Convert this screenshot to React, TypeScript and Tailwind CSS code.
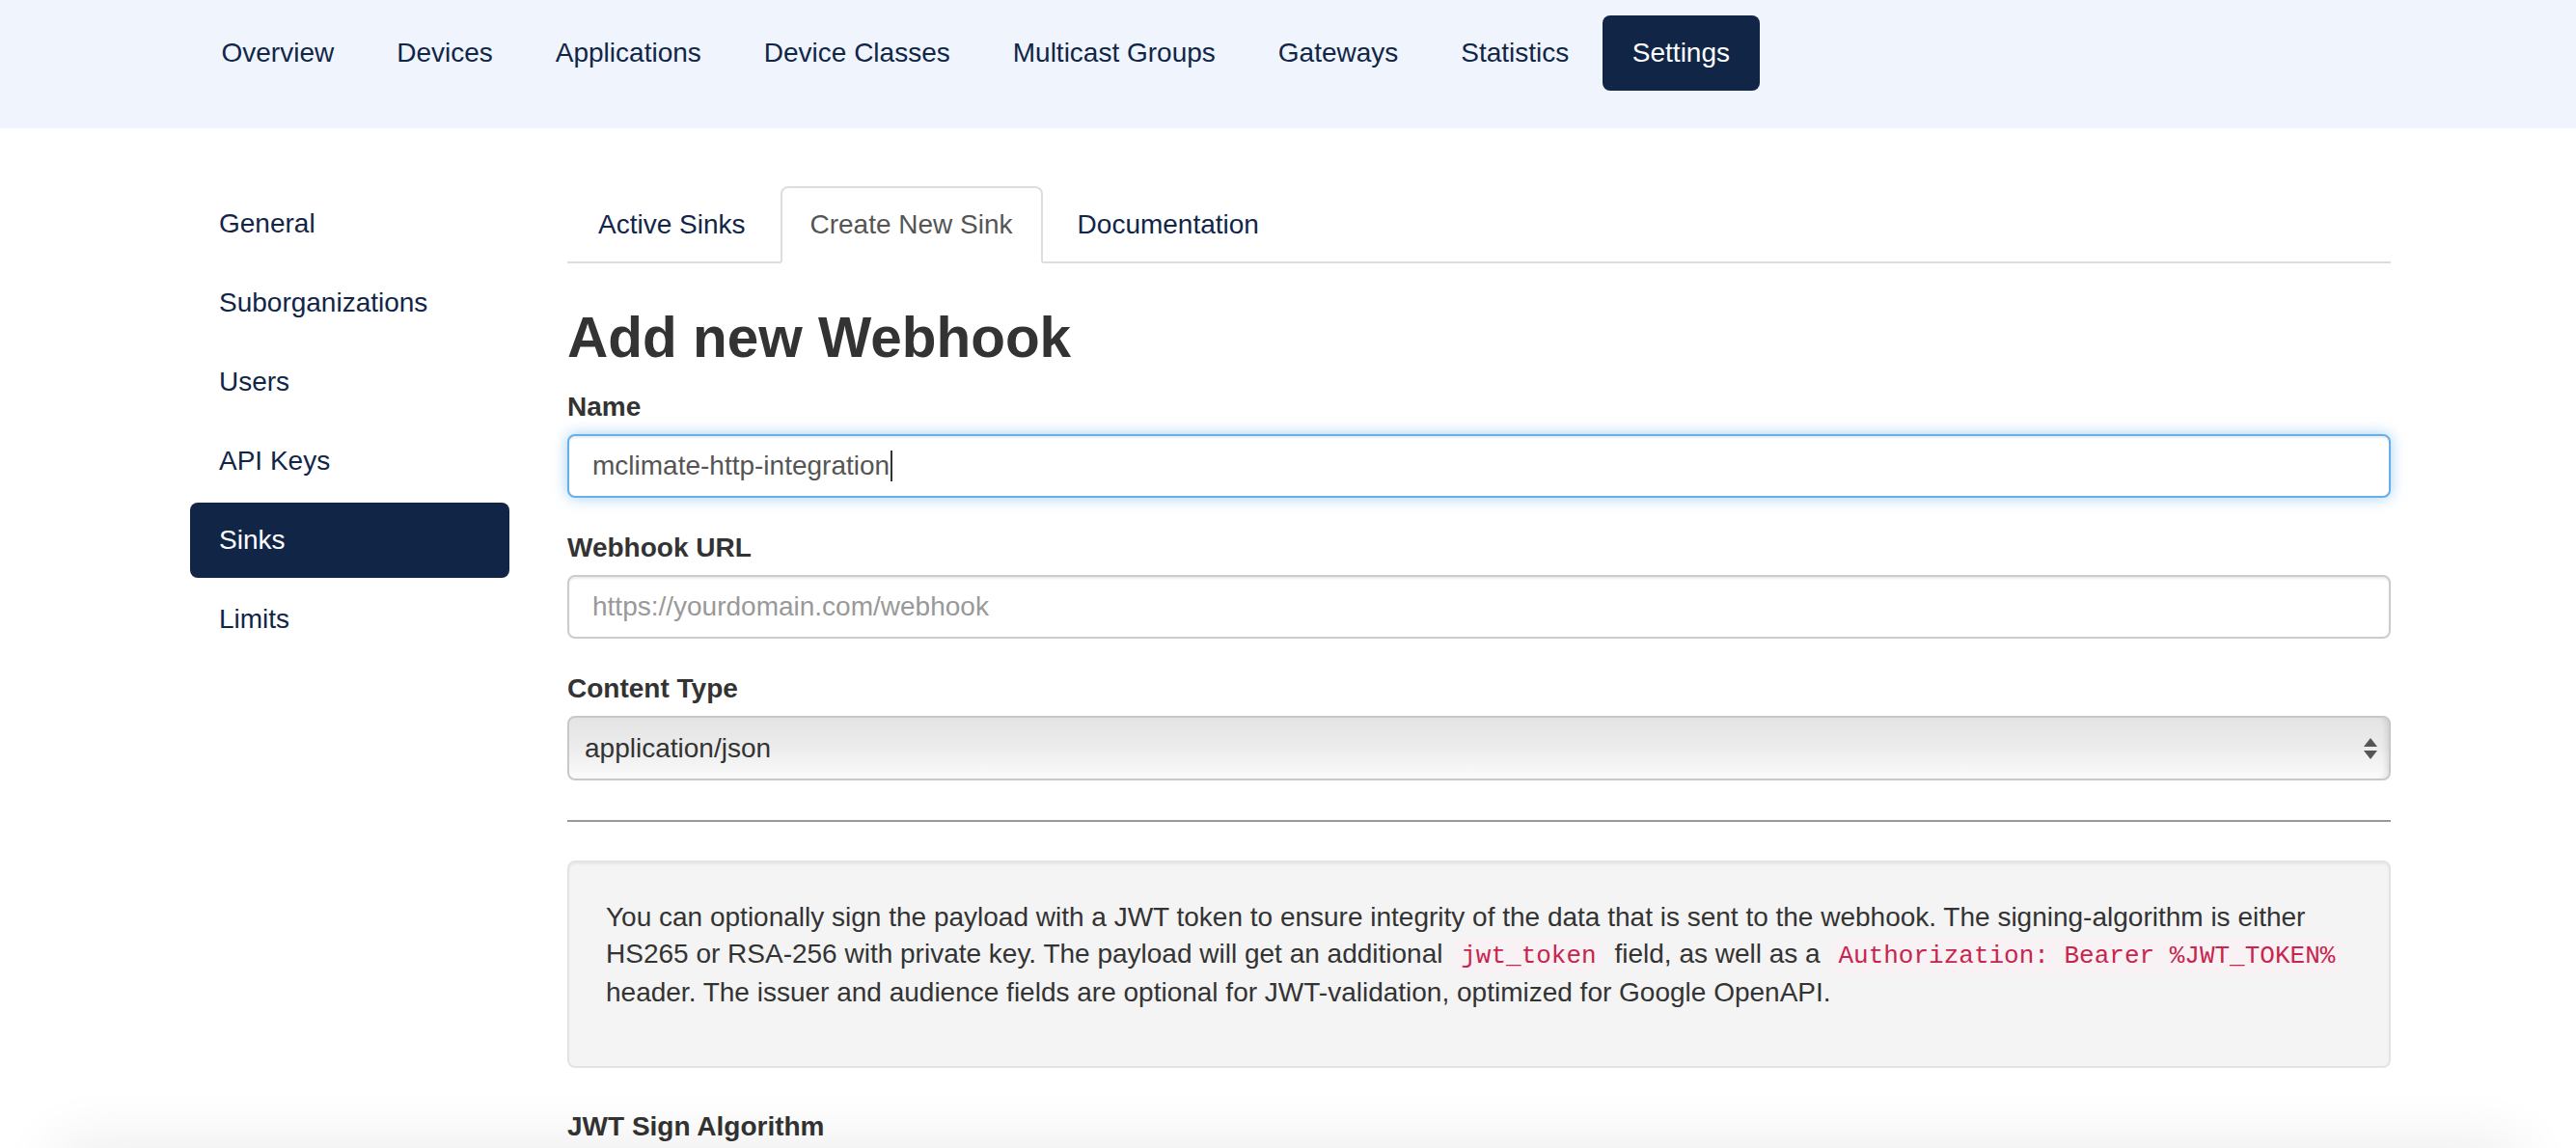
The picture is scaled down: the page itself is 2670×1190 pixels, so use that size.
import { useState } from 'react';

const topNav = ['Overview', 'Devices', 'Applications', 'Device Classes', 'Multicast Groups', 'Gateways', 'Statistics', 'Settings'];
const sideNav = ['General', 'Suborganizations', 'Users', 'API Keys', 'Sinks', 'Limits'];
const tabs = ['Active Sinks', 'Create New Sink', 'Documentation'];

const sans = "font-['Helvetica_Neue','Liberation_Sans',Arial,sans-serif]";
const mono = "font-['Menlo','Liberation_Mono',monospace]";

function Code({ children }: { children: string }) {
  return (
    <code className={`${mono} mx-[5px] rounded-[8px] bg-[#f9f2f4] px-[6px] py-[4px] text-[26px] text-[#c7254e]`}>
      {children}
    </code>
  );
}

function Label({ children }: { children: string }) {
  return <label className="mb-[9px] block text-[28px] font-bold leading-[38px] text-[#333]">{children}</label>;
}

export default function App() {
  const [name] = useState('mclimate-http-integration');

  return (
    <div className={`${sans} relative min-h-[1190px] overflow-hidden bg-white text-[28px] leading-[38px] text-[#333]`}>
      <header className="h-[133px] bg-[#f0f5fd]">
        <nav className="ml-[197px] flex pt-[16px]">
          {topNav.map((item) => (
            <a
              key={item}
              href="#"
              className={
                item === 'Settings'
                  ? 'ml-[2px] flex h-[78px] items-center rounded-[8px] bg-[#112647] px-[31px] text-white'
                  : 'flex h-[78px] items-center px-[32.5px] text-[#112647]'
              }
            >
              {item}
            </a>
          ))}
        </nav>
      </header>

      <div className="ml-[197px] flex w-[2281px] gap-[60px] pt-[60px]">
        <aside className="flex w-[331px] shrink-0 flex-col gap-[4px]">
          {sideNav.map((item) => (
            <a
              key={item}
              href="#"
              className={
                item === 'Sinks'
                  ? 'flex h-[78px] items-center rounded-[8px] bg-[#112647] px-[30px] text-white'
                  : 'flex h-[78px] items-center px-[30px] text-[#112647]'
              }
            >
              {item}
            </a>
          ))}
        </aside>

        <main className="min-w-0 flex-1">
          <ul className="flex border-b-2 border-[#ddd]">
            {tabs.map((tab) => {
              const active = tab === 'Create New Sink';
              return (
                <li key={tab} className="-mb-[2px] mr-[4px]">
                  <a
                    href="#"
                    className={
                      active
                        ? 'block rounded-t-[8px] border-2 border-[#ddd] border-b-white bg-white px-[29px] py-[19px] text-[#555]'
                        : 'block rounded-t-[8px] border-2 border-transparent px-[30px] py-[19px] text-[#112647]'
                    }
                  >
                    {tab}
                  </a>
                </li>
              );
            })}
          </ul>

          <h2 className="mt-[45px] mb-[22px] text-[58.5px] font-bold leading-[63px] text-[#333]">Add new Webhook</h2>

          <div className="mb-[33px]">
            <Label>Name</Label>
            <div className="flex h-[66px] items-center rounded-[8px] border-2 border-[#66afe9] bg-white px-[24px] text-[#555] shadow-[inset_0_2px_2px_rgba(0,0,0,0.075),0_0_15px_rgba(102,175,233,0.6)]">
              <span>{name}</span>
              <span className="ml-[1px] h-[32px] w-[2px] bg-[#333]" />
            </div>
          </div>

          <div className="mb-[33px]">
            <Label>Webhook URL</Label>
            <input
              type="text"
              placeholder="https://yourdomain.com/webhook"
              className="block h-[66px] w-full rounded-[8px] border-2 border-[#ccc] bg-white px-[24px] text-[28px] text-[#555] shadow-[inset_0_2px_2px_rgba(0,0,0,0.075)] outline-none placeholder:text-[#999]"
            />
          </div>

          <div>
            <Label>Content Type</Label>
            <div className="relative">
              <select className="block h-[67px] w-full appearance-none rounded-[8px] border-2 border-[#c8c8c8] bg-gradient-to-b from-[#e4e4e4] via-[#ececec] to-[#fbfbfb] px-[16px] text-[28px] text-[#333] shadow-[inset_-6px_0_6px_-4px_rgba(0,0,0,0.12)] outline-none">
                <option>application/json</option>
              </select>
              <svg className="pointer-events-none absolute top-[23px] right-[14px]" width="14" height="22" viewBox="0 0 14 22">
                <path d="M7 0 L14 9 L0 9 Z" fill="#555" />
                <path d="M0 13 L14 13 L7 22 Z" fill="#555" />
              </svg>
            </div>
          </div>

          <hr className="mt-[41px] mb-[40px] border-0 border-t-2 border-[#999]" />

          <div className="rounded-[8px] border-2 border-[#e3e3e3] bg-[#f4f4f4] px-[38px] py-[38px] shadow-[inset_0_2px_2px_rgba(0,0,0,0.05)]">
            <p className="mb-[19px]">
              You can optionally sign the payload with a JWT token to ensure integrity of the data that is sent to the
              webhook. The signing-algorithm is either HS265 or RSA-256 with private key. The payload will get an
              additional <Code>jwt_token</Code> field, as well as a <Code>Authorization: Bearer %JWT_TOKEN%</Code>{' '}
              header. The issuer and audience fields are optional for JWT-validation, optimized for Google OpenAPI.
            </p>
          </div>

          <div className="mt-[42px]">
            <Label>JWT Sign Algorithm</Label>
          </div>
        </main>
      </div>

      <div className="pointer-events-none fixed right-[60px] bottom-[-50px] left-[60px] h-[50px] rounded-[40px] shadow-[0_0_60px_10px_rgba(0,0,0,0.07)]" />
    </div>
  );
}
